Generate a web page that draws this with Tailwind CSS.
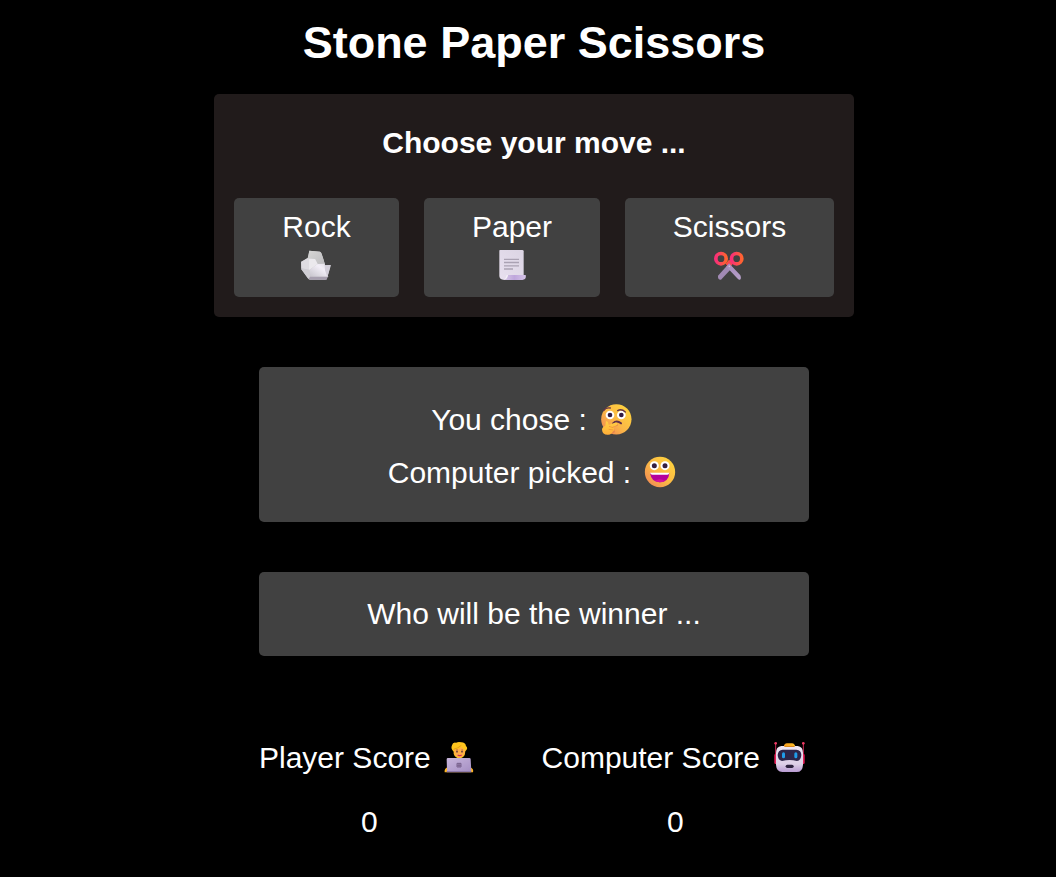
<!DOCTYPE html>
<html lang="en">
<head>
<meta charset="utf-8">
<title>Stone Paper Scissors</title>
<script src="https://cdn.jsdelivr.net/npm/@tailwindcss/browser@4"></script>
</head>
<body class="bg-black text-white font-['Liberation_Sans',Arial,sans-serif] text-[30px] leading-[34px] h-[877px] overflow-hidden">
<main class="flex flex-col items-center pl-3 pt-[17px]">
  <h1 class="text-[45px] leading-[52px] font-bold">Stone Paper Scissors</h1>

  <section class="mt-[25px] w-[640px] h-[223px] rounded-[5px] bg-[#211b1b] px-5 pt-8">
    <h2 class="font-bold text-center">Choose your move ...</h2>
    <div class="mt-[38px] flex justify-between">
      <button class="w-[165px] h-[99px] rounded-[5px] bg-[#414141] flex flex-col items-center pt-3">
        <span>Rock</span>
        <svg class="mt-[5px] mr-px size-8" viewBox="12 12 96 96">
          <defs>
            <linearGradient id="r1" x1="0" y1="1" x2="1" y2="0"><stop offset="0" stop-color="#c6c3cb"/><stop offset=".65" stop-color="#f3eff8"/><stop offset="1" stop-color="#dedbe2"/></linearGradient>
            <linearGradient id="r2" x1="0" y1="0" x2="1" y2="1"><stop offset="0" stop-color="#d6d6d5"/><stop offset="1" stop-color="#bcbbbe"/></linearGradient>
          </defs>
          <path d="M40 17L72 20Q76 22 77 27L83 45L87 61L104 60L103 67L94 97Q93 104 88 104H42Q38 104 35 99L16 73L15 50L35 39Z" fill="#cfcdd2"/>
          <path d="M40 17L72 20Q76 22 77 27L87 58L60 60L36 42Z" fill="url(#r2)"/>
          <path d="M16 51L34 40L57 42L64 56L40 74L16 70Z" fill="#dedce1"/>
          <path d="M39 42L57 42L65 57L39 75Z" fill="#ebe9ed"/>
          <path d="M40 75L65 57L86 56L89 75L97 95H42Z" fill="url(#r1)"/>
          <path d="M86 61L104 60L94 97L87 76Z" fill="#d3cfda"/>
          <path d="M16 70L39 75L42 96L37 101L16 73Z" fill="#d0ced4"/>
          <path d="M42 95H95L92 104H41L38 101Z" fill="#a79faf"/>
        </svg>
      </button>
      <button class="w-[176px] h-[99px] rounded-[5px] bg-[#414141] flex flex-col items-center pt-3">
        <span>Paper</span>
        <svg class="mt-[5px] size-8" viewBox="12 12 96 96">
          <defs>
            <linearGradient id="p1" x1="0" y1="1" x2="1" y2="0"><stop offset="0" stop-color="#e8e0ef"/><stop offset="1" stop-color="#dbd4e3"/></linearGradient>
            <linearGradient id="p2"><stop offset="0" stop-color="#d8cbe6"/><stop offset=".5" stop-color="#bfa6dc"/><stop offset="1" stop-color="#d5c4e8"/></linearGradient>
          </defs>
          <path d="M24 15H91Q95 15 95 19V95L42 104H33Q22 102 22 92V17Q22 15 24 15Z" fill="url(#p1)"/>
          <path d="M48 90H101Q104 104 91 105H33Q45 104 48 90Z" fill="url(#p2)"/>
          <path d="M48 90Q46 104 34 105Q43 98 44 90Z" fill="#f4eff7"/>
          <path d="M36 43H81M36 52.5H81M36 62.5H81M36 72H63" stroke="#aaa2b3" stroke-width="4"/>
        </svg>
      </button>
      <button class="w-[209px] h-[99px] rounded-[5px] bg-[#414141] flex flex-col items-center pt-3">
        <span>Scissors</span>
        <svg class="mt-[5px] mr-px size-8" viewBox="12 12 96 96">
          <defs>
            <linearGradient id="s1"><stop offset="0" stop-color="#f92f78"/><stop offset="1" stop-color="#ff6330"/></linearGradient>
            <linearGradient id="s2" x1="0" y1="0" x2="1" y2="1"><stop offset="0" stop-color="#a78abe"/><stop offset="1" stop-color="#b6a0c8"/></linearGradient>
          </defs>
          <path d="M50 56L64 70L69 57L60 44Z" fill="#ff5a38"/>
          <path d="M72 56L56 71L53 58L62 44Z" fill="#f94453"/>
          <circle cx="36" cy="41" r="15.5" fill="none" stroke="url(#s1)" stroke-width="11"/>
          <circle cx="83" cy="41" r="15.5" fill="none" stroke="url(#s1)" stroke-width="11"/>
          <path d="M56 60L67 71L36 104Q26 105 27 92Z" fill="#a18ab4"/>
          <path d="M52 65L60 55L94 91Q98 101 93 104Q89 106 84 99Z" fill="url(#s2)"/>
          <circle cx="61" cy="64" r="2.5" fill="#d3c5dd"/>
        </svg>
      </button>
    </div>
  </section>

  <section class="mt-[50px] w-[550px] h-[155px] rounded-[5px] bg-[#414141] pt-[36px] flex flex-col items-center gap-[19px]">
    <p class="flex gap-[13px] h-[34px]"><span>You chose :</span>
      <svg class="size-8 mr-[5px]" viewBox="12 12 96 96">
        <defs>
          <linearGradient id="f1" x1="1" y1=".1" x2=".1" y2="1"><stop offset="0" stop-color="#ffd63c"/><stop offset=".55" stop-color="#fbb746"/><stop offset="1" stop-color="#ef8555"/></linearGradient>
          <linearGradient id="f2" x1="0" y1="0" x2="0" y2="1"><stop offset="0" stop-color="#ffcf45"/><stop offset="1" stop-color="#ffae38"/></linearGradient>
        </defs>
        <circle cx="61" cy="61" r="45.5" fill="url(#f1)"/>
        <circle cx="42" cy="48" r="13" fill="#fff"/><circle cx="76" cy="48" r="13" fill="#fff"/>
        <circle cx="42" cy="48" r="7" fill="#321b41"/><circle cx="76" cy="48" r="7" fill="#321b41"/>
        <path d="M23 35Q29 25 43 27M65 35Q76 28 88 39" stroke="#633447" stroke-width="4" fill="none" stroke-linecap="round"/>
        <path d="M51 73Q62 62 75 73" stroke="#603149" stroke-width="6" fill="none" stroke-linecap="round"/>
        <path d="M37 78L60 72Q69 74 65 80L52 84L57 99Q48 108 34 106L22 99Z" fill="#dc764d" opacity=".65"/>
        <path d="M30 67Q36 65 38 77L57 71Q65 70 65 76Q64 79 49 84Q56 86 54 90Q57 95 50 98Q48 106 35 107Q19 107 18 92Q18 84 28 80Z" fill="url(#f2)"/>
        <path d="M39 82L51 86M38 91L52 93" stroke="#ea8d38" stroke-width="2"/>
      </svg>
    </p>
    <p class="flex gap-[13px] h-[34px]"><span>Computer picked :</span>
      <svg class="size-8 mr-[4px]" viewBox="12 12 96 96">
        <circle cx="60" cy="60" r="45.5" fill="url(#f1)"/>
        <circle cx="43" cy="41" r="13.5" fill="#fff"/><circle cx="75" cy="41" r="13.5" fill="#fff"/>
        <circle cx="43" cy="41" r="7.5" fill="#352042"/><circle cx="75" cy="41" r="7.5" fill="#352042"/>
        <path d="M30 63H88Q86 91 59 91Q34 90 30 63Z" fill="#b5009b"/>
        <path d="M30 62H88Q87 68 82 68H37Q32 68 30 62Z" fill="#fff"/>
        <path d="M44 86Q59 77 75 86Q69 91 59 91Q50 90 44 86Z" fill="#d5109b"/>
      </svg>
    </p>
  </section>

  <section class="mt-[50px] w-[550px] h-[84px] rounded-[5px] bg-[#414141] flex items-center justify-center">
    <p>Who will be the winner ...</p>
  </section>

  <section class="mt-[85px] w-[550px] flex justify-between">
    <div class="flex flex-col items-center gap-[30px]">
      <p class="flex gap-[12px] h-[34px]"><span>Player Score</span>
        <svg class="size-8 mr-[5px]" viewBox="12 12 96 96">
          <defs><linearGradient id="l1" x1="0" y1="0" x2="1" y2="1"><stop offset="0" stop-color="#c8b6dc"/><stop offset="1" stop-color="#a690c4"/></linearGradient></defs>
          <path d="M17 106Q15 95 26 91H94Q105 96 102 106Z" fill="#ffb51e"/>
          <path d="M44 44Q34 35 39 25Q41 15 51 17Q59 13 67 16Q79 16 81 27Q89 34 79 43L77 54Q73 63 61 64Q48 63 44 50Z" fill="#ffc51d"/>
          <path d="M45 37Q60 39 67 29Q71 37 78 38L77 48Q74 61 61 62Q48 60 46 48Z" fill="#ffad48"/>
          <path d="M44 37Q57 34 67 25" stroke="#d88a16" stroke-width="2" fill="none"/>
          <path d="M51 39H57M67 39H72" stroke="#9b562c" stroke-width="2"/>
          <circle cx="54" cy="44" r="2.5" fill="#56313e"/><circle cx="69" cy="44" r="2.5" fill="#56313e"/>
          <path d="M56 54Q62 58 68 54" stroke="#d52c56" stroke-width="3.5" fill="none"/>
          <path d="M27 63H91Q95 63 95 67L97 102H24L23 67Q23 63 27 63Z" fill="url(#l1)"/>
          <path d="M54 79H66V90H54ZM60 79V90M54 84.5H66" stroke="#6c557f" stroke-width="2.5" fill="none"/>
          <path d="M23 102H97V106H23Z" fill="#8f7bab"/>
        </svg>
      </p>
      <p>0</p>
    </div>
    <div class="flex flex-col items-center gap-[30px]">
      <p class="flex gap-[13px] h-[34px]"><span>Computer Score</span>
        <svg class="size-8 mr-[4px]" viewBox="12 12 96 96">
          <defs>
            <linearGradient id="b1" x1="0" y1="0" x2="0" y2="1"><stop offset="0" stop-color="#f0e7f5"/><stop offset=".7" stop-color="#ddd0e7"/><stop offset="1" stop-color="#b89bd2"/></linearGradient>
            <linearGradient id="b2"><stop offset="0" stop-color="#f39a1d"/><stop offset="1" stop-color="#ffc128"/></linearGradient>
          </defs>
          <path d="M20 20V52M103 20V52" stroke="#ce2855" stroke-width="3"/>
          <circle cx="20" cy="19" r="4" fill="#ed3c65"/><circle cx="103" cy="19" r="4" fill="#ed3c65"/>
          <path d="M16 54Q16 50 22 51V81Q16 82 16 77ZM107 54Q107 50 101 51V81Q107 82 107 77Z" fill="#e51e57"/>
          <path d="M44 31Q45 19 54 19H69Q78 20 79 31Z" fill="url(#b2)"/>
          <path d="M37 27H86Q102 29 102 48V83Q101 105 83 105H40Q22 104 21 83V48Q21 29 37 27Z" fill="url(#b1)"/>
          <path d="M46 27H77V30H46Z" fill="#d8891e"/>
          <path d="M41 38H82Q97 39 97 54Q96 71 84 72Q62 66 39 72Q27 70 26 54Q27 39 41 38Z" fill="#2d2548"/>
          <rect x="39" y="46" width="9" height="18" rx="4.5" fill="#209ce9"/><rect x="76" y="46" width="9" height="18" rx="4.5" fill="#209ce9"/>
          <rect x="50" y="83" width="24" height="10" rx="5" fill="#2d233e"/>
        </svg>
      </p>
      <p>0</p>
    </div>
  </section>
</main>
</body>
</html>
